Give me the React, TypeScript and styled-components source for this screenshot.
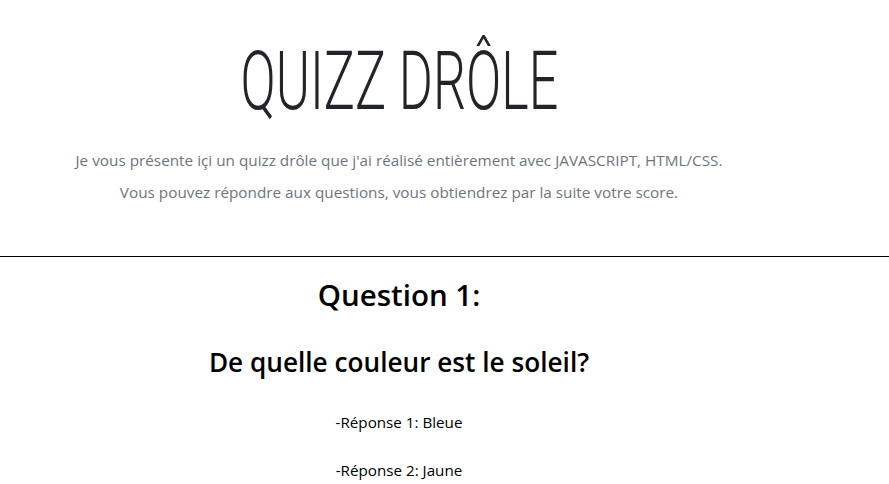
import React from "react";
import styled, { createGlobalStyle } from "styled-components";

const Global = createGlobalStyle`
  html, body { margin: 0; padding: 0; background: #fff; }
  body { font-family: "Open Sans", "Noto Sans", sans-serif; color: #212529; }
`;

const Header = styled.header`
  width: 798px;
  display: flex;
  flex-direction: column;
  align-items: center;
  padding-top: 38px;
  padding-bottom: 48.5px;
`;

const Title = styled.h1`
  margin: 0;
  font-family: "Roboto", sans-serif;
  font-weight: 300;
  font-size: 82px;
  line-height: 86px;
  color: #212529;
  transform: scaleX(0.635);
  white-space: nowrap;
`;

const Lead = styled.p<{ $first?: boolean }>`
  margin: ${(p) => (p.$first ? "19.5px" : "0")} 0 0;
  font-size: 15.3px;
  line-height: 32px;
  color: #6c757d;
  text-align: center;
  white-space: nowrap;
`;

const Divider = styled.hr`
  margin: 0;
  border: 0;
  border-top: 1px solid #000;
`;

const Quiz = styled.section`
  width: 798px;
  display: flex;
  flex-direction: column;
  align-items: center;
  padding-top: 18px;
`;

const QuestionNumber = styled.h2`
  margin: 0;
  font-size: 29.5px;
  font-weight: 600;
  line-height: 40px;
  color: #000;
`;

const QuestionText = styled.h3`
  margin: 29px 0 0;
  font-size: 26.2px;
  font-weight: 600;
  line-height: 36px;
  color: #000;
`;

const Answer = styled.p<{ $first?: boolean }>`
  margin: ${(p) => (p.$first ? "31px" : "26px")} 0 0;
  font-size: 15.2px;
  line-height: 22px;
  color: #000;
`;

export default function App() {
  return (
    <>
      <Global />
      <Header>
        <Title>QUIZZ DRÔLE</Title>
        <Lead $first>
          Je vous présente içi un quizz drôle que j'ai réalisé entièrement avec JAVASCRIPT, HTML/CSS.
        </Lead>
        <Lead>Vous pouvez répondre aux questions, vous obtiendrez par la suite votre score.</Lead>
      </Header>
      <Divider />
      <Quiz>
        <QuestionNumber>Question 1:</QuestionNumber>
        <QuestionText>De quelle couleur est le soleil?</QuestionText>
        <Answer $first>-Réponse 1: Bleue</Answer>
        <Answer>-Réponse 2: Jaune</Answer>
      </Quiz>
    </>
  );
}
